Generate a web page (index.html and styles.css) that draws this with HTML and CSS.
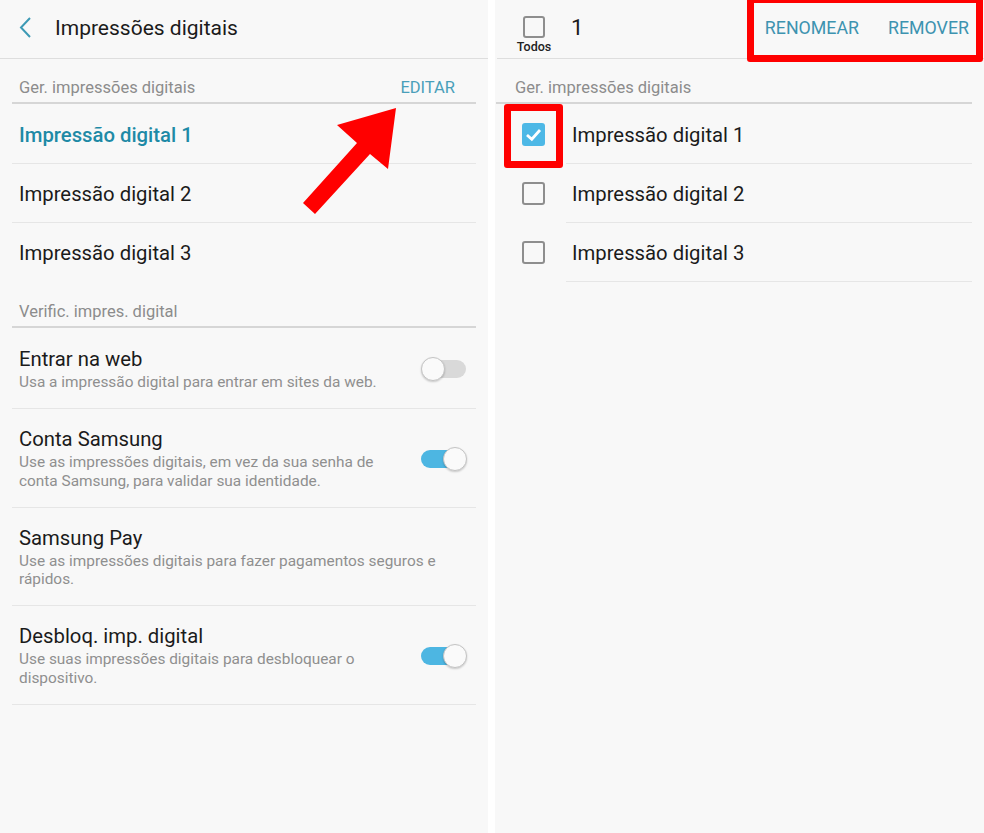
FILE: index.html
```html
<!DOCTYPE html>
<html lang="pt">
<head>
  <meta charset="UTF-8" />
  <meta name="viewport" content="width=device-width, initial-scale=1" />
  <title>Impressões digitais</title>
  <link rel="stylesheet" href="styles.css">
</head>
<body>
  <div class="tela">

    <!-- Painel esquerdo: configurações -->
    <section class="painel">
      <header class="topo">
        <svg class="voltar" width="14" height="22" viewBox="0 0 14 22">
          <path d="M11 1 L2 10.5 L11 20" fill="none" stroke="#3d9ab5" stroke-width="2" />
        </svg>
        <h1 class="titulo">Impressões digitais</h1>
      </header>

      <div class="secao">
        <span>Ger. impressões digitais</span>
        <span class="acao">EDITAR</span>
      </div>
      <ul class="lista">
        <li class="item ativo">Impressão digital 1</li>
        <li class="item">Impressão digital 2</li>
        <li class="item sem-linha">Impressão digital 3</li>
      </ul>

      <div class="secao">
        <span>Verific. impres. digital</span>
      </div>
      <ul class="lista">
        <li class="opcao">
          <div class="textos">
            <div class="opcao-titulo">Entrar na web</div>
            <div class="opcao-desc">Usa a impressão digital para entrar em sites da web.</div>
          </div>
          <span class="chave"></span>
        </li>
        <li class="opcao">
          <div class="textos">
            <div class="opcao-titulo">Conta Samsung</div>
            <div class="opcao-desc">Use as impressões digitais, em vez da sua senha de conta Samsung, para validar sua identidade.</div>
          </div>
          <span class="chave ligada"></span>
        </li>
        <li class="opcao">
          <div class="textos">
            <div class="opcao-titulo">Samsung Pay</div>
            <div class="opcao-desc">Use as impressões digitais para fazer pagamentos seguros e rápidos.</div>
          </div>
        </li>
        <li class="opcao">
          <div class="textos">
            <div class="opcao-titulo">Desbloq. imp. digital</div>
            <div class="opcao-desc">Use suas impressões digitais para desbloquear o dispositivo.</div>
          </div>
          <span class="chave ligada"></span>
        </li>
      </ul>
    </section>

    <!-- Painel direito: modo de seleção -->
    <section class="painel">
      <header class="topo topo-selecao">
        <div class="todos">
          <span class="caixa"></span>
          <span class="todos-label">Todos</span>
        </div>
        <span class="contagem">1</span>
        <div class="acoes">
          <span class="acao-topo">RENOMEAR</span>
          <span class="acao-topo">REMOVER</span>
        </div>
      </header>

      <div class="secao secao-dir">
        <span>Ger. impressões digitais</span>
      </div>
      <ul class="lista lista-dir">
        <li class="marcavel">
          <span class="celula"><span class="caixa marcada">
            <svg width="23" height="23" viewBox="0 0 23 23"><path d="M5 12 L9.8 16.3 L18 7" fill="none" stroke="#fff" stroke-width="2.8" /></svg>
          </span></span>
          <span class="rotulo">Impressão digital 1</span>
        </li>
        <li class="marcavel">
          <span class="celula"><span class="caixa"></span></span>
          <span class="rotulo">Impressão digital 2</span>
        </li>
        <li class="marcavel">
          <span class="celula"><span class="caixa"></span></span>
          <span class="rotulo">Impressão digital 3</span>
        </li>
      </ul>
    </section>

    <!-- Marcações em vermelho -->
    <svg class="seta" width="984" height="833" viewBox="0 0 984 833">
      <polygon points="396,108 388,169 370,154 315,214 303,203 357,143 337,125" fill="#ff0000" />
    </svg>
    <div class="destaque destaque-acoes"></div>
    <div class="destaque destaque-check"></div>
  </div>
</body>
</html>
```

FILE: styles.css
```css
body {
  margin: 0;
  background: #ffffff;
  font-family: Roboto, "Noto Sans", sans-serif;
  color: #1b1b1b;
}

.tela {
  position: relative;
  display: flex;
  gap: 7px;
  width: 984px;
  height: 833px;
  overflow: hidden;
}

.painel {
  flex: 1;
  background: #f8f8f8;
}
.painel:first-child {
  flex: 0 0 488px;
}

ul {
  list-style: none;
  margin: 0;
  padding: 0;
}

/* ----------------- Topo ----------------- */
.topo {
  display: flex;
  align-items: center;
  height: 58px;
  border-bottom: 1px solid #dedede;
}
.voltar {
  margin-left: 19px;
  margin-right: 22px;
  margin-bottom: 2px;
}
.titulo {
  margin: 0 0 2px;
  font-size: 21px;
  font-weight: 400;
  color: #1b1b1b;
}

/* ----------------- Seções ----------------- */
.secao {
  display: flex;
  justify-content: space-between;
  margin: 0 12px;
  padding: 19px 21px 4px 7px;
  line-height: 20px;
  font-size: 16.5px;
  color: #8c8c8c;
  border-bottom: 2px solid #d6d6d6;
}
.acao {
  color: #4a9fba;
  font-size: 16.5px;
}
.secao-dir {
  margin-left: 1px;
  padding-left: 19px;
}

.lista {
  margin: 0 12px;
  padding-top: 1px;
}
.item {
  height: 58px;
  line-height: 60px;
  padding-left: 7px;
  font-size: 20.3px;
  border-bottom: 1px solid #e6e6e6;
}
.item.ativo {
  color: #1e8aa6;
  font-weight: 500;
}
.item.sem-linha {
  border-bottom-color: transparent;
}
.lista + .secao {
  padding-top: 20px;
}

/* ----------------- Opções com chave ----------------- */
.opcao {
  display: flex;
  align-items: center;
  padding: 18px 9px 16.5px 7px;
  border-bottom: 1px solid #e6e6e6;
}
.textos {
  flex: 1;
  padding-right: 24px;
}
.opcao-titulo {
  font-size: 20.3px;
  line-height: 24px;
  margin-bottom: 2px;
}
.opcao-desc {
  font-size: 15.4px;
  line-height: 18.5px;
  color: #8f8f8f;
}

.chave {
  position: relative;
  width: 46px;
  height: 24px;
  flex-shrink: 0;
}
.chave::before {
  content: "";
  position: absolute;
  left: 6px;
  right: 1px;
  top: 3px;
  height: 18px;
  border-radius: 9px;
  background: #d9d9d9;
}
.chave::after {
  content: "";
  position: absolute;
  left: 0;
  top: 0;
  width: 22px;
  height: 22px;
  border-radius: 50%;
  background: #fafafa;
  border: 1px solid #c4c4c4;
  box-shadow: 0 1px 2px rgba(0, 0, 0, 0.2);
}
.chave.ligada::before {
  left: 0;
  right: 6px;
  background: #4db6e2;
}
.chave.ligada::after {
  left: auto;
  right: 0;
}

/* ----------------- Painel de seleção ----------------- */
.topo-selecao {
  margin-left: 2px;
}
.todos {
  display: flex;
  flex-direction: column;
  align-items: center;
  margin-left: 16px;
  padding-top: 12px;
  width: 42px;
}
.todos-label {
  font-size: 12.5px;
  font-weight: 500;
  margin-top: 1px;
  color: #222;
}
.contagem {
  font-size: 22px;
  margin-left: 16px;
  margin-bottom: 3px;
}
.acoes {
  display: flex;
  gap: 29px;
  margin-left: auto;
  margin-right: 15px;
  margin-bottom: 4px;
}
.acao-topo {
  font-size: 17.8px;
  color: #3d93b0;
}

.caixa {
  display: block;
  box-sizing: border-box;
  width: 23px;
  height: 23px;
  border: 2px solid #8e8e8e;
  border-radius: 3px;
}
.todos .caixa {
  width: 22px;
  height: 22px;
}
.caixa.marcada {
  border: none;
  background: #4db8e6;
}
.caixa svg {
  display: block;
}

.lista-dir {
  margin: 0 12px 0 0;
}
.marcavel {
  display: flex;
  height: 59px;
}
.celula {
  display: flex;
  align-items: center;
  justify-content: center;
  width: 71px;
  padding-left: 6px;
  box-sizing: border-box;
}
.rotulo {
  flex: 1;
  display: flex;
  align-items: center;
  padding-left: 6px;
  padding-top: 2px;
  font-size: 20.3px;
  border-bottom: 1px solid #e6e6e6;
}

/* ----------------- Marcações ----------------- */
.seta {
  position: absolute;
  left: 0;
  top: 0;
  pointer-events: none;
}
.destaque {
  position: absolute;
  border: 7px solid #ff0000;
  border-radius: 3px;
  box-sizing: border-box;
}
.destaque-acoes {
  left: 747px;
  top: -4px;
  width: 236px;
  height: 66px;
}
.destaque-check {
  left: 504px;
  top: 104px;
  width: 59px;
  height: 64px;
}
```
